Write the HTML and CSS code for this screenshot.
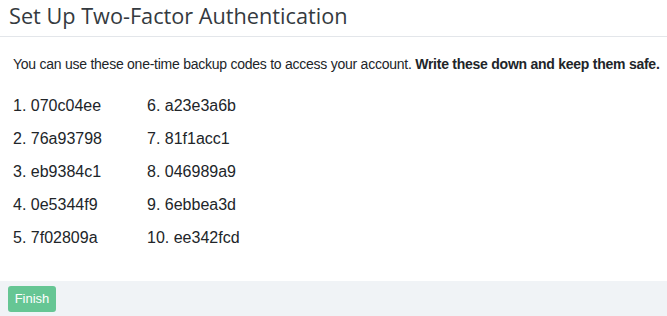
FILE: index.html
```html
<!DOCTYPE html>
<html>
<head>
<meta charset="utf-8">
<link rel="stylesheet" href="styles.css">
</head>
<body>
<div class="modal">
  <div class="modal-header">
    <h1 class="title">Set Up Two-Factor Authentication</h1>
  </div>
  <div class="modal-body">
    <p class="intro">You can use these one-time backup codes to access your account. <strong>Write these down and keep them safe.</strong></p>
    <div class="codes">
      <ol class="col">
        <li>1. 070c04ee</li>
        <li>2. 76a93798</li>
        <li>3. eb9384c1</li>
        <li>4. 0e5344f9</li>
        <li>5. 7f02809a</li>
      </ol>
      <ol class="col">
        <li>6. a23e3a6b</li>
        <li>7. 81f1acc1</li>
        <li>8. 046989a9</li>
        <li>9. 6ebbea3d</li>
        <li>10. ee342fcd</li>
      </ol>
    </div>
  </div>
  <div class="modal-footer">
    <button class="btn-finish">Finish</button>
  </div>
</div>
</body>
</html>
```
FILE: styles.css
```css
* { box-sizing: border-box; }
html, body { margin: 0; padding: 0; background: #fff; }
body { font-family: "Liberation Sans", Arial, sans-serif; color: #212529; }
.modal { width: 667px; height: 316px; display: flex; flex-direction: column; }
.modal-header {
  height: 37px;
  border-bottom: 1px solid #e3e6ea;
  padding: 0 9px;
  display: flex;
  align-items: center;
}
.title {
  margin: 0;
  font-family: "Open Sans", sans-serif;
  font-weight: 400;
  font-size: 21.7px;
  color: #343a40;
  line-height: 1;
  position: relative;
  top: -2px;
}
.modal-body { flex: 1; padding: 18px 13px 0; }
.intro { margin: 0 0 16px; font-size: 14px; line-height: 18px; color: #212529; white-space: nowrap; letter-spacing: -0.25px; }
.intro strong { font-weight: 700; }
.codes { display: flex; }
.col { list-style: none; margin: 0; padding: 0; width: 134px; }
.col li { font-size: 16px; line-height: 33px; color: #212529; }
.modal-footer {
  height: 35px;
  background: #f0f3f6;
  padding: 5px 8px;
  display: flex;
  align-items: center;
}
.btn-finish {
  height: 26px;
  width: 48px;
  border: none;
  border-radius: 3px;
  background: #66c694;
  color: #fff;
  font-family: "Liberation Sans", Arial, sans-serif;
  font-size: 13px;
  padding: 0;
}
```
